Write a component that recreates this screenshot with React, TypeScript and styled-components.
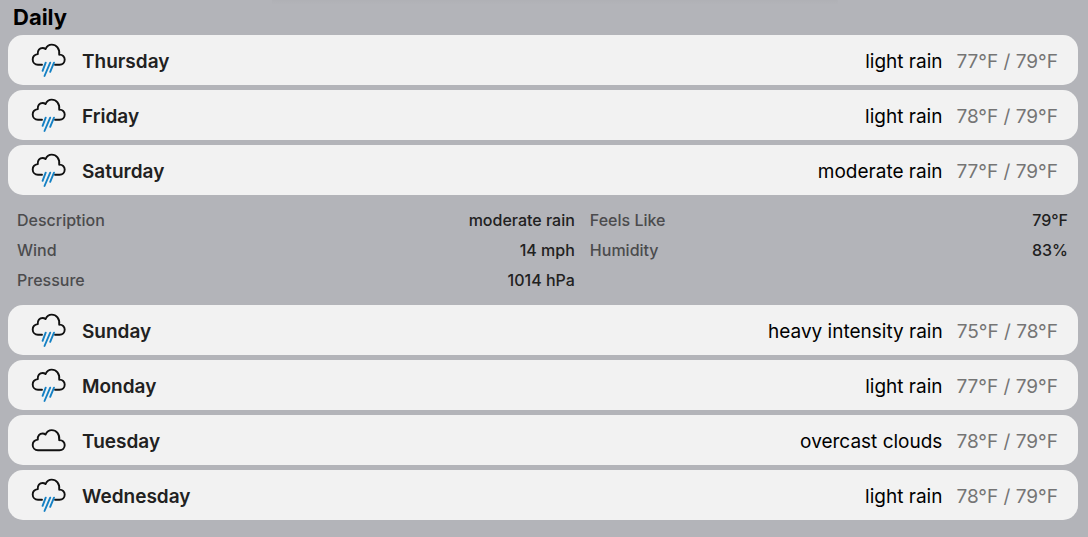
import React, { useState } from "react";
import styled, { createGlobalStyle } from "styled-components";

const GlobalStyle = createGlobalStyle`
  *, *::before, *::after { box-sizing: border-box; }
  body {
    margin: 0;
    min-height: 100vh;
    background: #b3b4b9;
    color: #000;
    font-family: Inter, "Liberation Sans", sans-serif;
  }
`;

const Page = styled.main`
  padding: 0 10px 12px 8px;
  background: linear-gradient(rgba(0, 0, 0, 0.02), transparent) 52% 0 / 52% 5px no-repeat;
`;

const Title = styled.h2`
  margin: 0;
  padding: 0 5px;
  font-size: 22px;
  font-weight: 700;
  line-height: 35px;
`;

const DayItem = styled.section`
  margin-bottom: 5px;
`;

const DayHeading = styled.h3`
  margin: 0;
`;

const DayButton = styled.button`
  display: flex;
  align-items: center;
  width: 100%;
  height: 50px;
  padding: 3px 20px 0 16px;
  border: 0;
  border-radius: 15px;
  background: #f2f2f2;
  font: inherit;
  font-size: 19px;
  font-weight: 400;
  line-height: 24px;
  text-align: left;
  cursor: pointer;
`;

const Icon = styled.svg`
  flex: none;
  width: 50px;
  height: 44px;
  margin-right: 8px;
`;

const DayName = styled.span`
  flex: 1;
  color: #212121;
  font-weight: 600;
`;

const Description = styled.span`
  margin-right: 14px;
  color: #000;
`;

const Temperature = styled.span`
  color: #757575;
`;

const Details = styled.dl`
  display: grid;
  grid-template-columns: 7fr 6fr;
  column-gap: 15px;
  margin: 0;
  padding: 10px 10px 5px 9px;
`;

const Detail = styled.div`
  display: flex;
  justify-content: space-between;
  align-items: center;
  height: 30px;
  font-size: 16px;
  font-weight: 500;
  line-height: 20px;
`;

const Label = styled.dt`
  color: #4b4b4d;
`;

const Value = styled.dd`
  margin: 0;
  color: #212121;
`;

type Sky = "rain" | "cloud";

function WeatherIcon({ sky }: { sky: Sky }) {
  return (
    <Icon viewBox="0 2 50 44" fill="none" strokeWidth="1.9" strokeLinecap="round" strokeLinejoin="round" aria-hidden="true">
      {sky === "rain" ? (
        <>
          <path stroke="#111" d="M18 26.8H14C10.800 26.800 8.700 24.300 8.700 21.500C8.700 18.600 10.900 16.500 13.800 16.100C13.300 12.400 15.700 10 18.600 10C19.800 10 20.800 10.400 21.500 11.100C22.800 8.200 25 6.600 27.700 6.600C32.300 6.600 36 10.800 35.200 16.700C38.500 16.400 40.700 18.700 40.700 21.500C40.700 24.500 38.600 26.800 35.500 26.800H31" />
          <path stroke="#1581c4" d="M21.700 24.700L18.600 32.800M26.200 24.700L20.500 38M30 24.700L26.200 33.800" />
        </>
      ) : (
        <path stroke="#111" d="M14 32.300C10.800 32.300 8.700 29.800 8.700 27C8.700 24.100 10.900 22 13.800 21.600C13.300 17.900 15.700 15.500 18.600 15.500C19.800 15.500 20.800 15.900 21.500 16.600C22.800 13.700 25 12.100 27.700 12.100C32.300 12.100 36 16.300 35.200 22.200C38.500 21.900 40.700 24.200 40.700 27C40.700 30 38.600 32.300 35.500 32.300Z" />
      )}
    </Icon>
  );
}

const details = [
  ["Description", "moderate rain"],
  ["Feels Like", "79°F"],
  ["Wind", "14 mph"],
  ["Humidity", "83%"],
  ["Pressure", "1014 hPa"],
];

const days: { name: string; text: string; temp: string; sky: Sky; details?: string[][] }[] = [
  { name: "Thursday", text: "light rain", temp: "77°F / 79°F", sky: "rain" },
  { name: "Friday", text: "light rain", temp: "78°F / 79°F", sky: "rain" },
  { name: "Saturday", text: "moderate rain", temp: "77°F / 79°F", sky: "rain", details },
  { name: "Sunday", text: "heavy intensity rain", temp: "75°F / 78°F", sky: "rain" },
  { name: "Monday", text: "light rain", temp: "77°F / 79°F", sky: "rain" },
  { name: "Tuesday", text: "overcast clouds", temp: "78°F / 79°F", sky: "cloud" },
  { name: "Wednesday", text: "light rain", temp: "78°F / 79°F", sky: "rain" },
];

export default function App() {
  const [open, setOpen] = useState("Saturday");
  return (
    <>
      <GlobalStyle />
      <Page>
        <Title>Daily</Title>
        {days.map((day) => (
          <DayItem key={day.name}>
            <DayHeading>
              <DayButton
                type="button"
                aria-expanded={open === day.name}
                onClick={() => setOpen(open === day.name ? "" : day.name)}
              >
                <WeatherIcon sky={day.sky} />
                <DayName>{day.name}</DayName>
                <Description>{day.text}</Description>
                <Temperature>{day.temp}</Temperature>
              </DayButton>
            </DayHeading>
            {open === day.name && day.details && (
              <Details>
                {day.details.map(([label, value]) => (
                  <Detail key={label}>
                    <Label>{label}</Label>
                    <Value>{value}</Value>
                  </Detail>
                ))}
              </Details>
            )}
          </DayItem>
        ))}
      </Page>
    </>
  );
}
